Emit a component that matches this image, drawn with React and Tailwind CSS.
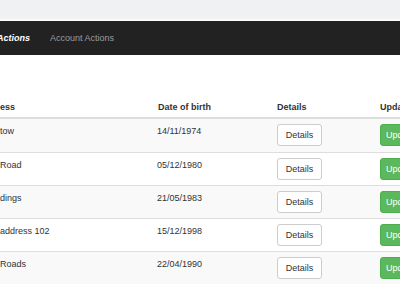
export default function App() {
  const rows = [
    { addr: "tow", dob: "14/11/1974" },
    { addr: "Road", dob: "05/12/1980" },
    { addr: "dings", dob: "21/05/1983" },
    { addr: "address 102", dob: "15/12/1998" },
    { addr: "Roads", dob: "22/04/1990" },
  ];
  return (
    <div className="w-[400px] h-[284px] overflow-hidden bg-white font-['Liberation_Sans',Arial,sans-serif] text-[9px] leading-[13px] text-[#333]">
      <div className="h-[21px] bg-[#f0f1f2] border-b-2 border-[#fbfbfb]" />
      <nav className="h-[34px] bg-[#222222] flex items-center whitespace-nowrap">
        <span className="-ml-[3px] text-white font-bold italic">Actions</span>
        <span className="ml-[20px] text-[#9d9d9d]">Account Actions</span>
      </nav>
      <div className="mt-[40px]">
        <div className="grid grid-cols-[152px_120px_103px_1fr] h-[24px] pt-[6px] border-b-2 border-[#dddddd] font-bold whitespace-nowrap overflow-hidden">
          <div>ess</div>
          <div className="pl-[6px]">Date of birth</div>
          <div className="pl-[5px]">Details</div>
          <div className="pl-[5px] overflow-hidden">Update</div>
        </div>
        {rows.map((r, i) => (
          <div
            key={i}
            className={`grid grid-cols-[152px_120px_103px_1fr] h-[33px] whitespace-nowrap ${i === 0 ? "" : "border-t border-[#dddddd]"} ${i % 2 === 0 ? "bg-[#f9f9f9]" : "bg-white"}`}
          >
            <div className="pt-[6px]">{r.addr}</div>
            <div className="pt-[6px] pl-[5px]">{r.dob}</div>
            <div className="pt-[5px] pl-[5px]">
              <button className="h-[22px] w-[45px] bg-white border border-[#cccccc] rounded-[3px] text-[#333] text-[9px] flex items-center justify-center">
                Details
              </button>
            </div>
            <div className="pt-[5px] pl-[5px] overflow-hidden">
              <button className="h-[22px] px-[5px] bg-[#5cb85c] border border-[#4cae4c] rounded-[3px] text-white text-[9px] flex items-center">
                Update
              </button>
            </div>
          </div>
        ))}
      </div>
    </div>
  );
}
